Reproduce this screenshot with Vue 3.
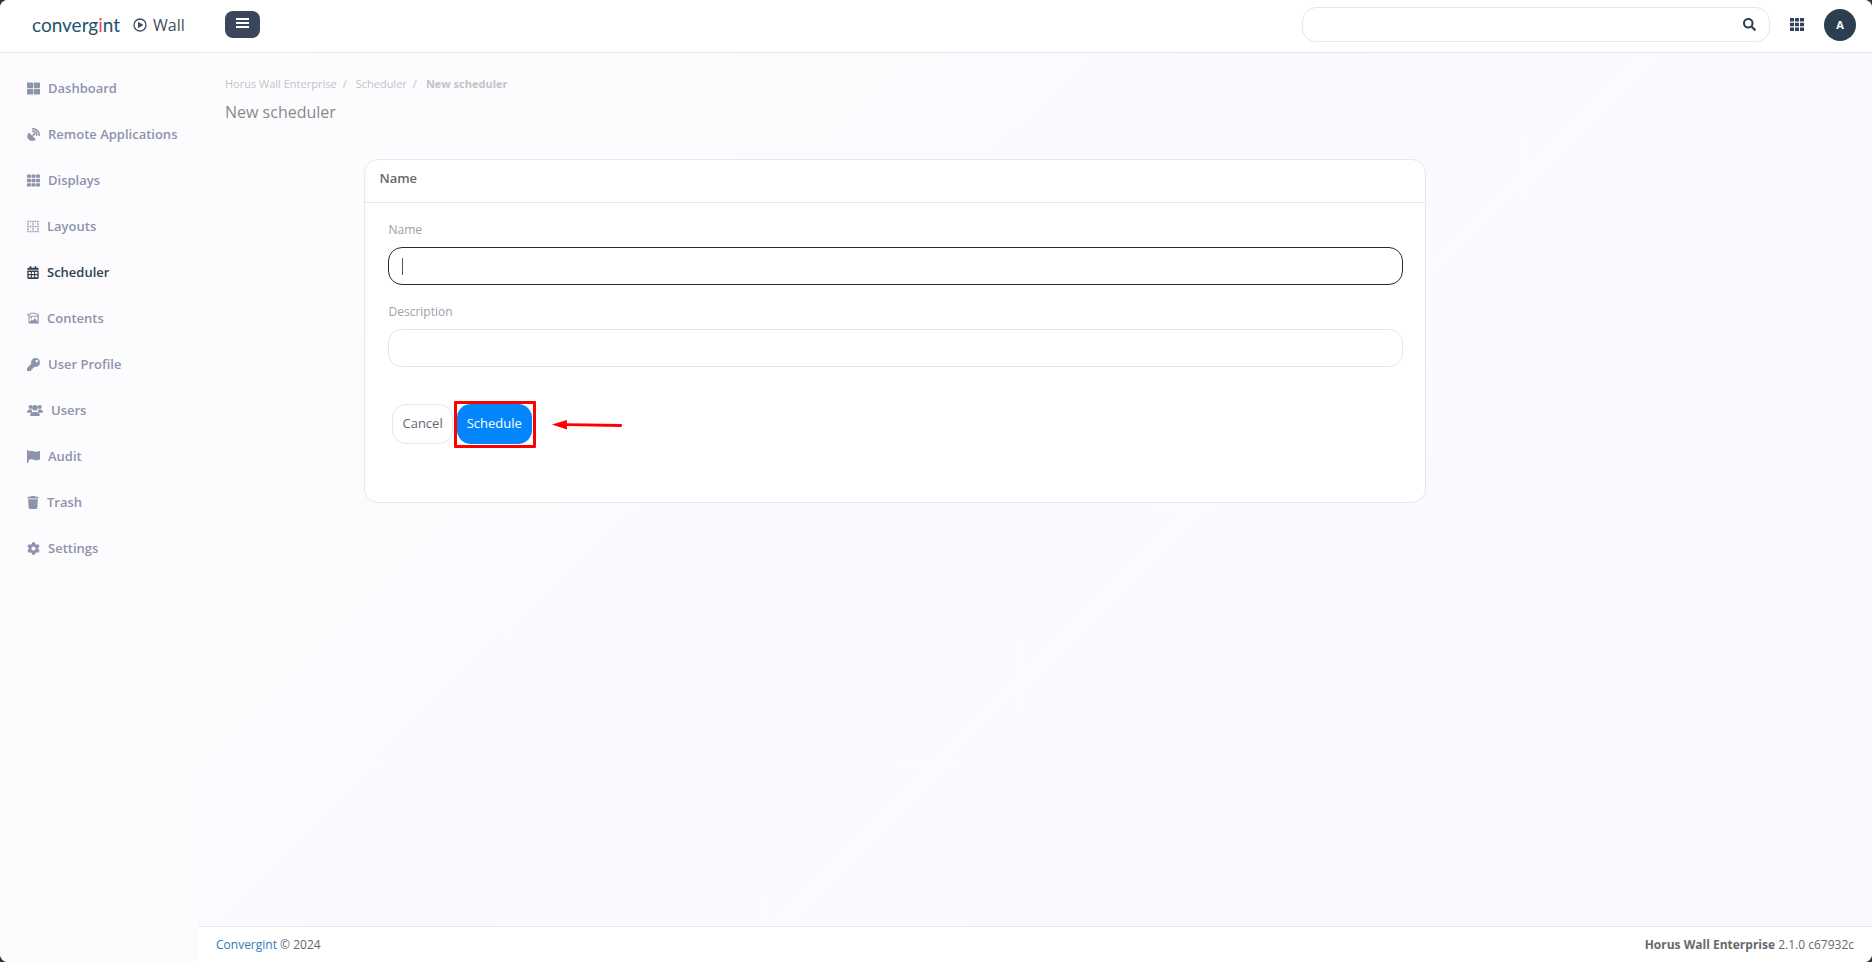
<script setup>
import { ref } from 'vue'

const search = ref('')
const name = ref('')
const description = ref('')

const menu = [
  { label: 'Dashboard', w: 512, path: 'M32 20h184c18 0 32 14 32 32v156c0 18-14 32-32 32H32c-18 0-32-14-32-32V52c0-18 14-32 32-32zM304 20h176c18 0 32 14 32 32v156c0 18-14 32-32 32H304c-18 0-32-14-32-32V52c0-18 14-32 32-32zM32 268h184c18 0 32 14 32 32v160c0 18-14 32-32 32H32c-18 0-32-14-32-32V300c0-18 14-32 32-32zM304 268h176c18 0 32 14 32 32v160c0 18-14 32-32 32H304c-18 0-32-14-32-32V300c0-18 14-32 32-32z' },
  { label: 'Remote Applications', w: 512, path: 'M192 32c0-18 14-32 32-32 159 0 288 129 288 288 0 18-14 32-32 32s-32-14-32-32C448 164 348 64 224 64c-18 0-32-14-32-32zM192 128c0-18 14-32 32-32 106 0 192 86 192 192 0 18-14 32-32 32s-32-14-32-32c0-71-57-128-128-128-18 0-32-14-32-32zM60 200c8-12 24-13 34-3l107 107 28-29c-3-6-5-12-5-19 0-26 22-48 48-48s48 22 48 48-22 48-48 48c-7 0-13-2-19-5l-28 28 107 107c10 10 9 26-3 34-83 57-196 48-269-25S3 283 60 200z' },
  { label: 'Displays', w: 512, path: 'M24 16h108c13 0 24 11 24 24v88c0 13-11 24-24 24H24c-13 0-24-11-24-24V40c0-13 11-24 24-24zM202 16h108c13 0 24 11 24 24v88c0 13-11 24-24 24H202c-13 0-24-11-24-24V40c0-13 11-24 24-24zM380 16h108c13 0 24 11 24 24v88c0 13-11 24-24 24H380c-13 0-24-11-24-24V40c0-13 11-24 24-24zM24 188h108c13 0 24 11 24 24v88c0 13-11 24-24 24H24c-13 0-24-11-24-24v-88c0-13 11-24 24-24zM202 188h108c13 0 24 11 24 24v88c0 13-11 24-24 24H202c-13 0-24-11-24-24v-88c0-13 11-24 24-24zM380 188h108c13 0 24 11 24 24v88c0 13-11 24-24 24H380c-13 0-24-11-24-24v-88c0-13 11-24 24-24zM24 360h108c13 0 24 11 24 24v88c0 13-11 24-24 24H24c-13 0-24-11-24-24v-88c0-13 11-24 24-24zM202 360h108c13 0 24 11 24 24v88c0 13-11 24-24 24H202c-13 0-24-11-24-24v-88c0-13 11-24 24-24zM380 360h108c13 0 24 11 24 24v88c0 13-11 24-24 24H380c-13 0-24-11-24-24v-88c0-13 11-24 24-24z' },
  { label: 'Layouts', w: 448, path: 'M0 32h60v60H0zM97 32h60v60H97zM194 32h60v60h-60zM291 32h60v60h-60zM388 32h60v60h-60zM0 129h60v60H0zM194 129h60v60h-60zM388 129h60v60h-60zM0 226h60v60H0zM97 226h60v60H97zM194 226h60v60h-60zM291 226h60v60h-60zM388 226h60v60h-60zM0 323h60v60H0zM194 323h60v60h-60zM388 323h60v60h-60zM0 420h60v60H0zM97 420h60v60H97zM194 420h60v60h-60zM291 420h60v60h-60zM388 420h60v60h-60z' },
  { label: 'Scheduler', w: 448, active: true, path: 'M128 0c18 0 32 14 32 32v32h128V32c0-18 14-32 32-32s32 14 32 32v32h48c27 0 48 21 48 48v32H0v-32c0-27 21-48 48-48h48V32c0-18 14-32 32-32zM0 176h448v288c0 27-21 48-48 48H48c-27 0-48-21-48-48zM52 232v80h88v-80zM180 232v80h88v-80zM308 232v80h88v-80zM52 360v80h88v-80zM180 360v80h88v-80zM308 360v80h88v-80z' },
  { label: 'Contents', w: 448, path: 'M0 64h112l32-32h176l32 32h96v384H48V176L0 96zM48 96l34 48h318V96h-70l-32-32H166l-32 32zM88 184v216l88-104 48 44 72-100 104 144V184zM160 200a32 32 0 1 1 0 64 32 32 0 0 1 0-64z' },
  { label: 'User Profile', w: 512, path: 'M512 176C512 273 433 352 336 352c-11 0-22-1-33-3l-24 27a24 24 0 0 1-18 8H224v40c0 13-11 24-24 24h-40v40c0 13-11 24-24 24H24c-13 0-24-11-24-24v-78c0-6 3-12 7-17l162-162C163 214 160 195 160 176 160 79 239 0 336 0S512 79 512 176zM336 128c0 27 21 48 48 48s48-21 48-48-21-48-48-48-48 21-48 48z' },
  { label: 'Users', w: 640, path: 'M144 32a80 80 0 1 1 0 160 80 80 0 0 1 0-160zM512 32a80 80 0 1 1 0 160 80 80 0 0 1 0-160zM320 32a112 112 0 1 1 0 224 112 112 0 0 1 0-224zM0 320c0-59 48-107 107-107h43c16 0 31 4 45 10-11 65 16 104 41 118H21c-12 0-21-9-21-21zM404 341c28-18 53-64 41-118 14-6 29-10 45-10h43c59 0 107 48 107 107 0 12-9 21-21 21zM128 453c0-74 60-133 133-133h118c73 0 133 59 133 133 0 15-12 27-27 27H155c-15 0-27-12-27-27z' },
  { label: 'Audit', w: 512, path: 'M32 0c18 0 32 14 32 32v18c95-38 155-20 223 7 51 21 93 14 151-11 35-15 74-3 74 31v260c0 20-12 36-31 44-76 35-130 31-205 5-68-24-121-29-212 3v91c0 18-14 32-32 32S0 498 0 480V32C0 14 14 0 32 0z' },
  { label: 'Trash', w: 448, path: 'M135 18c5-11 16-18 29-18h120c13 0 24 7 29 18l7 14h96c18 0 32 14 32 32s-14 32-32 32H32C14 96 0 82 0 64s14-32 32-32h96zM32 128h384l-21 339c-2 25-23 45-48 45H101c-25 0-46-20-48-45z' },
  { label: 'Settings', w: 512, path: 'M487 316l-42-25c4-23 4-47 0-70l42-25c5-3 7-9 6-14-11-36-30-68-55-95-4-4-10-5-15-2l-42 25c-18-15-39-27-61-35V26c0-6-4-11-9-12-37-8-75-8-110 0-5 1-9 6-9 12v49c-22 8-43 20-61 35L89 85c-5-2-11-1-15 3-25 27-44 59-55 94-2 6 0 12 5 14l43 25c-4 23-4 47 0 70l-43 25c-5 3-7 9-5 14 11 36 30 68 55 95 4 4 10 5 15 2l42-25c18 16 39 27 61 35v50c0 5 4 10 9 11 37 9 75 8 110 0 5-1 9-6 9-11v-50c22-8 43-19 61-35l42 25c5 3 11 2 15-2 25-27 44-59 55-95 1-5-1-11-6-14zM256 336a80 80 0 1 1 0-160 80 80 0 0 1 0 160z' },
]
</script>

<template>
  <div class="app">
    <header class="topbar">
      <div class="brand">
        <a href="#" class="logo">converg<span>i</span>nt</a>
        <svg class="play" viewBox="0 0 14 14">
          <circle cx="7" cy="7" r="6" fill="none" stroke="currentColor" stroke-width="1.3" />
          <path d="M5 3.8v6.4L10.4 7z" fill="currentColor" />
        </svg>
        <span class="product">Wall</span>
      </div>
      <button class="toggle" aria-label="Toggle menu">
        <svg viewBox="0 0 13 11"><path d="M0 0h13v2H0zM0 4h13v2H0zM0 8h13v2H0z" fill="currentColor" /></svg>
      </button>
      <form class="search" @submit.prevent>
        <input v-model="search" type="text" aria-label="Search">
        <button aria-label="Search">
          <svg viewBox="0 0 512 512"><path fill="currentColor" d="M505 443L405 343c-4-4-10-7-17-7h-16c28-35 44-80 44-128C416 93 323 0 208 0S0 93 0 208s93 208 208 208c48 0 93-16 128-44v16c0 7 3 13 7 17l100 100c9 9 24 9 34 0l28-28c9-10 9-25 0-34zM208 336a128 128 0 1 1 0-256 128 128 0 0 1 0 256z" /></svg>
        </button>
      </form>
      <button class="apps" aria-label="Applications">
        <svg viewBox="0 0 14 13"><path fill="currentColor" d="M0 0h4v3.6H0zM5 0h4v3.6H5zM10 0h4v3.6h-4zM0 4.7h4v3.6H0zM5 4.7h4v3.6H5zM10 4.7h4v3.6h-4zM0 9.4h4V13H0zM5 9.4h4V13H5zM10 9.4h4V13h-4z" /></svg>
      </button>
      <button class="avatar">A</button>
    </header>

    <div class="body">
      <nav class="sidebar">
        <a v-for="item in menu" :key="item.label" href="#" :class="{ active: item.active }">
          <svg :viewBox="`0 0 ${item.w} 512`" :class="'w' + item.w">
            <path :d="item.path" fill="currentColor" fill-rule="evenodd" />
          </svg>
          {{ item.label }}
        </a>
      </nav>

      <div class="content">
        <main>
          <ol class="breadcrumb">
            <li><a href="#">Horus Wall Enterprise</a></li>
            <li><a href="#">Scheduler</a></li>
            <li class="current">New scheduler</li>
          </ol>
          <h1>New scheduler</h1>

          <div class="column">
            <section class="card">
              <h2>Name</h2>
              <form @submit.prevent>
                <label for="name">Name</label>
                <div class="field">
                  <input id="name" v-model="name" class="focused" type="text">
                  <span v-if="!name" class="caret"></span>
                </div>
                <label for="description">Description</label>
                <div class="field">
                  <input id="description" v-model="description" type="text">
                </div>
                <div class="actions">
                  <button type="button" class="cancel">Cancel</button>
                  <div class="marked">
                    <button class="submit">Schedule</button>
                    <span class="frame"></span>
                    <svg class="arrow" viewBox="0 0 70 10">
                      <path d="M0 4.5L15 0v3.2L69 4.1q1 0 1 1.4t-1 1.4L15 6v3.5z" fill="#fe0000" />
                    </svg>
                  </div>
                </div>
              </form>
            </section>
          </div>
        </main>

        <footer>
          <span><a href="#">Convergint</a> © 2024</span>
          <span><b>Horus Wall Enterprise</b> 2.1.0 c67932c</span>
        </footer>
      </div>
    </div>
  </div>
</template>

<style>
body {
  margin: 0;
  background: #333;
}
</style>

<style scoped>
.app {
  display: flex;
  flex-direction: column;
  min-height: 100vh;
  border-radius: 8px;
  overflow: hidden;
  background: linear-gradient(135deg, #fdfdfe, #fafaff 60%, #f9f9fe);
  font-family: "Open Sans", "Noto Sans", sans-serif;
  font-size: 13px;
  color: #66686c;
}

.app * {
  box-sizing: border-box;
}

a {
  color: inherit;
  text-decoration: none;
}

button {
  padding: 0;
  border: 0;
  background: none;
  font: inherit;
  cursor: pointer;
}

svg {
  display: block;
  flex: none;
}

.topbar {
  display: flex;
  align-items: center;
  height: 53px;
  padding: 0 16px 3px 32px;
  border-bottom: 1px solid #e4e7eb;
  background: #fff;
}

.brand {
  display: flex;
  align-items: center;
  width: 193px;
  color: #414d5d;
}

.logo {
  width: 101px;
  font: 19px/24px Lato, sans-serif;
  color: #1d5470;
}

.logo span {
  color: #e0504f;
}

.play {
  width: 14px;
  height: 14px;
  margin-right: 6px;
}

.product {
  font-size: 16px;
  line-height: 24px;
}

.toggle {
  display: flex;
  align-items: center;
  justify-content: center;
  width: 35px;
  height: 27px;
  padding-bottom: 2px;
  border-radius: 8px;
  background: #3b455b;
  color: #fff;
}

.toggle svg {
  width: 13px;
  height: 11px;
}

.search {
  display: flex;
  align-items: center;
  width: 25vw;
  height: 35px;
  margin-left: auto;
  border: 1px solid #e6e7e9;
  border-radius: 14px;
}

.search input {
  flex: 1;
  min-width: 0;
  padding: 0 14px;
  border: 0;
  outline: 0;
  background: none;
  font: inherit;
}

.search button {
  padding-right: 13px;
  color: #2c3e50;
}

.search svg {
  width: 13px;
  height: 13px;
}

.apps {
  margin-left: 20px;
  color: #343f5b;
}

.apps svg {
  width: 14px;
  height: 13px;
}

.avatar {
  width: 32px;
  height: 32px;
  margin-left: 20px;
  border-radius: 50%;
  background: #2c3e50;
  color: #fff;
  font-size: 11px;
  font-weight: 700;
}

.body {
  display: flex;
  flex: 1;
}

.sidebar {
  flex: none;
  width: 198px;
  padding-top: 12px;
  background: #fcfcfe;
}

.sidebar a {
  display: flex;
  align-items: center;
  gap: 8px;
  height: 46px;
  padding-left: 27px;
  font-weight: 600;
  color: #8d93aa;
}

.sidebar a.active {
  color: #2f4050;
}

.sidebar svg {
  height: 13px;
}

.w448 {
  width: 12px;
}

.w512 {
  width: 13px;
}

.w640 {
  width: 16px;
}

.content {
  display: flex;
  flex: 1;
  flex-direction: column;
  min-width: 0;
}

main {
  flex: 1;
  padding-top: 23px;
}

.breadcrumb {
  display: flex;
  margin: 0;
  padding: 0 27px;
  list-style: none;
  font-size: 11px;
  line-height: 16px;
  color: #c3c3c7;
}

.breadcrumb li:not(:last-child)::after {
  content: "/";
  padding: 0 9px 0 6px;
}

.breadcrumb .current {
  font-weight: 700;
}

h1 {
  margin: 8px 0 0;
  padding: 0 27px;
  font-size: 16px;
  font-weight: 400;
  line-height: 24px;
  color: #88898c;
}

.column {
  width: calc(100% * 8 / 12);
  margin: 35px 0 40px calc(100% / 12);
  padding: 0 27px;
}

.card {
  border: 1px solid #e7e8ec;
  border-radius: 14px;
  background: #fff;
}

h2 {
  height: 43px;
  margin: 0;
  padding: 8px 14px;
  border-bottom: 1px solid #e4e7eb;
  font-size: 13px;
  font-weight: 600;
  line-height: 20px;
}

.card form {
  padding: 18px 22px 58px 23px;
}

label {
  display: block;
  font-size: 12px;
  line-height: 18px;
  color: #a0a1a8;
}

.field {
  position: relative;
  margin: 8px 0 18px;
}

.field input {
  display: block;
  width: 100%;
  height: 38px;
  padding: 0 14px;
  border: 1px solid #e4e5e7;
  border-radius: 14px;
  outline: 0;
  background: #fff;
  font: inherit;
}

.field input.focused,
.field input:focus {
  border-color: #2b2b2d;
}

.caret {
  position: absolute;
  top: 11px;
  left: 14px;
  width: 1px;
  height: 17px;
  background: #55565a;
}

.actions {
  display: flex;
  gap: 4px;
  padding: 19px 4px 0;
}

.actions button {
  height: 40px;
  padding: 0 10px 2px;
  border-radius: 14px;
}

.actions .cancel {
  padding: 0 9px 2px;
  border: 1px solid #e6e7e9;
  background: #fff;
  color: #66686c;
}

.marked {
  position: relative;
}

.submit {
  background: #0385fb;
  color: #fff;
}

.frame {
  position: absolute;
  inset: -3px -4px -4px -3px;
  border: 3px solid #fe0000;
  border-radius: 1px;
  pointer-events: none;
}

.arrow {
  position: absolute;
  top: 16px;
  left: calc(100% + 20px);
  width: 70px;
  height: 10px;
}

footer {
  display: flex;
  justify-content: space-between;
  padding: 8px 18px;
  border-top: 1px solid #e7e8ec;
  background: #fff;
  font-size: 12px;
  line-height: 19px;
}

footer a {
  color: #337ab7;
}
</style>
